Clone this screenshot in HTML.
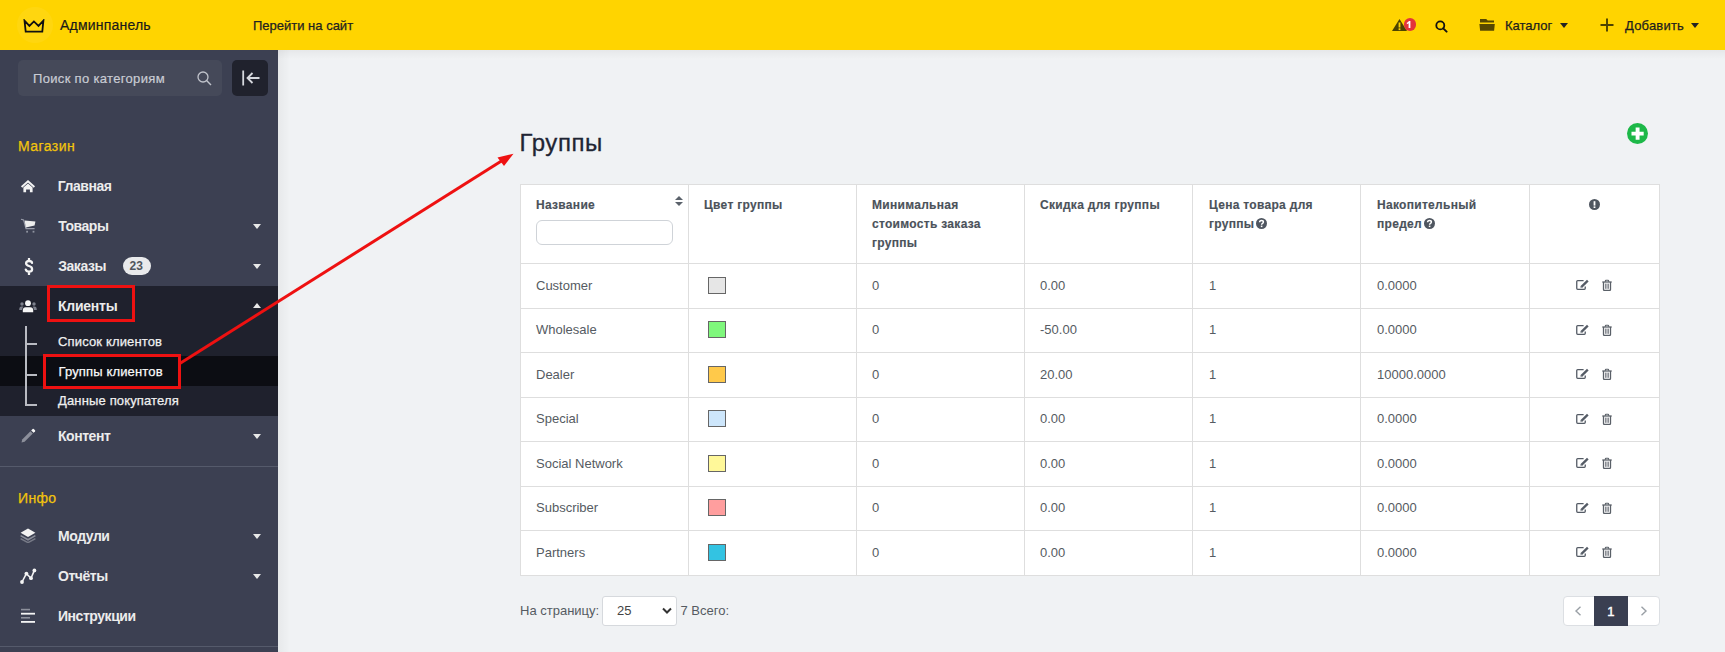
<!DOCTYPE html>
<html><head><meta charset="utf-8">
<style>
*{box-sizing:border-box}
html,body{margin:0;padding:0}
body{width:1725px;height:652px;overflow:hidden;position:relative;background:#f0f2f4;font-family:"Liberation Sans",sans-serif}
.a{position:absolute}
.t{position:absolute;line-height:1;white-space:nowrap}
#hdr{left:0;top:0;width:1725px;height:50px;background:#ffd400}
#sb{left:0;top:50px;width:278px;height:602px;background:#3c4052}
.mi{color:#ececec;font-size:14px;font-weight:700;letter-spacing:-.45px}
.sec{color:#f2c40c;font-size:14px;-webkit-text-stroke:.25px #f2c40c}
.sub{color:#f0f0f0;font-size:13px;-webkit-text-stroke:.25px #f0f0f0}
.caret{position:absolute;width:0;height:0;border-left:4.6px solid transparent;border-right:4.6px solid transparent;border-top:5.8px solid #e8e8e8}
.th{color:#4b525a;font-size:12px;font-weight:700;letter-spacing:.3px;-webkit-text-stroke:.15px #4b525a}
.td{color:#555b62;font-size:13px}
.vl{position:absolute;top:184px;width:1px;height:392px;background:#dedede}
.hl{position:absolute;left:520px;width:1140px;height:1px;background:#dedede}
.sw{position:absolute;left:708px;width:18px;height:17px;border:1px solid #666}
</style></head><body>
<!-- header -->
<div id="hdr" class="a"></div>
<div class="a" style="left:17px;top:7px;width:36px;height:36px;border-radius:50%;background:rgba(255,255,255,.06)"></div>
<svg class="a" style="left:23px;top:18.8px" width="22" height="15" viewBox="0 0 22 15"><path d="M1.5 1.6 L6.4 6.9 L10.9 2.4 L15.5 6.9 L20.4 1.6 L19.3 12.7 H2.7 Z" fill="none" stroke="#111" stroke-width="1.8" stroke-linejoin="miter" stroke-miterlimit="6"/></svg>
<div class="t" style="left:60px;top:18.2px;font-size:14px;color:#1a1a1a;letter-spacing:.2px;-webkit-text-stroke:.2px #1a1a1a">Админпанель</div>
<div class="t" style="left:253px;top:18.7px;font-size:13px;color:#222;-webkit-text-stroke:.25px #222">Перейти на сайт</div>

<div class="a" style="left:278px;top:50px;width:1447px;height:9px;background:linear-gradient(rgba(0,0,0,.045),rgba(0,0,0,0))"></div>
<div class="a" style="left:278px;top:50px;width:12px;height:602px;background:linear-gradient(90deg,rgba(0,0,0,.04),rgba(0,0,0,0))"></div>
<div id="sb" class="a"></div>
<!-- header right -->
<svg class="a" style="left:1392px;top:19px" width="15" height="12" viewBox="0 0 15 12"><path d="M7.5 0 L15 12 H0 Z" fill="#4d4300"/><rect x="6.6" y="3.5" width="1.8" height="5" fill="#ffd400"/><rect x="6.6" y="9.3" width="1.8" height="1.8" fill="#ffd400"/></svg>
<div class="a" style="left:1403.5px;top:18.2px;width:12.5px;height:12.5px;border-radius:50%;background:#e3343a"></div>
<svg class="a" style="left:1405px;top:20px" width="8" height="10" viewBox="0 0 8 10"><path d="M4.5 1 V8" stroke="#fff" stroke-width="1.8"/><path d="M5.2 0.9 L1.8 2.8 L1.8 4.2 L4.5 3 Z" fill="#fff"/></svg>
<svg class="a" style="left:1435px;top:19.5px" width="13" height="13" viewBox="0 0 13 13"><circle cx="5.3" cy="5.4" r="4" fill="none" stroke="#111" stroke-width="1.8"/><path d="M8.2 8.3 L11.6 11.7" stroke="#111" stroke-width="1.9" stroke-linecap="round"/></svg>
<svg class="a" style="left:1479px;top:19px" width="17" height="12" viewBox="0 0 17 12"><path d="M1 0.1 H7.2 L8.7 1.6 H15 V3.6 H1 Z" fill="#574800"/><path d="M0.4 5.1 H15.8 L15.1 11.8 H1.1 Z" fill="#574800"/></svg>
<div class="t" style="left:1505px;top:19.2px;font-size:13px;color:#1e1e1e;-webkit-text-stroke:.25px #1e1e1e">Каталог</div>
<div class="caret" style="left:1559.5px;top:23px;border-left-width:4px;border-right-width:4px;border-top:5px solid #222"></div>
<svg class="a" style="left:1600px;top:18px" width="14" height="14" viewBox="0 0 14 14"><path d="M7 0.5 V13.5 M0.5 7 H13.5" stroke="#4d4300" stroke-width="1.9"/></svg>
<div class="t" style="left:1625px;top:19.2px;font-size:13px;color:#1e1e1e;letter-spacing:.2px;-webkit-text-stroke:.25px #1e1e1e">Добавить</div>
<div class="caret" style="left:1690.5px;top:23px;border-left-width:4px;border-right-width:4px;border-top:5px solid #222"></div>

<!-- sidebar -->
<div class="a" style="left:18px;top:60px;width:204px;height:36px;border-radius:5px;background:#454959"></div>
<div class="t" style="left:33px;top:72px;font-size:13px;color:#c9ccd4;letter-spacing:.33px;-webkit-text-stroke:.2px #c9ccd4">Поиск по категориям</div>
<svg class="a" style="left:197px;top:71px" width="15" height="15" viewBox="0 0 15 15"><circle cx="6" cy="6" r="5" fill="none" stroke="#c0c3cb" stroke-width="1.3"/><path d="M9.6 9.6 L14 14" stroke="#c0c3cb" stroke-width="1.4"/></svg>
<div class="a" style="left:232px;top:60px;width:36px;height:36px;border-radius:5px;background:#20222d"></div>
<svg class="a" style="left:242px;top:70px" width="18" height="16" viewBox="0 0 18 16"><path d="M1.2 0.5 V15.5" stroke="#d6d8de" stroke-width="1.8"/><path d="M17.5 8 H5.5 M10.5 3 L5.5 8 L10.5 13" fill="none" stroke="#d6d8de" stroke-width="1.8"/></svg>

<div class="t sec" style="left:18px;top:139.4px;letter-spacing:.45px">Магазин</div>


<div class="t mi" style="left:57.8px;top:179.3px">Главная</div>
<svg class="a" style="left:20px;top:179px" width="16" height="14" viewBox="0 0 16 14"><path d="M1.6 8 L8 2.2 L14.4 8" fill="none" stroke="#f4f4f4" stroke-width="1.9"/><path d="M3.4 8.6 L8 4.6 L12.6 8.6 V13.2 H9.9 V10.4 H6.1 V13.2 H3.4 Z" fill="#f4f4f4"/></svg>

<div class="t mi" style="left:58.2px;top:219.2px">Товары</div>
<svg class="a" style="left:20px;top:218px" width="17" height="16" viewBox="0 0 17 16"><path d="M1 1.2 L3.6 2 L6 10.6 H14.6" fill="none" stroke="#9a9daa" stroke-width="1.1"/><path d="M4.6 2.4 L15.4 3.4 L14.6 7.6 L5.8 9.4 Z" fill="#eeeeee"/><rect x="6.2" y="12.8" width="1.8" height="1.8" fill="#8f93a0"/><rect x="12.6" y="12.8" width="1.8" height="1.8" fill="#8f93a0"/></svg>
<div class="caret" style="left:252.9px;top:224px"></div>

<div class="t mi" style="left:58.2px;top:259.1px">Заказы</div>
<svg class="a" style="left:23.5px;top:257.5px" width="10" height="17" viewBox="0 0 10 17"><path d="M8 4.9 Q7.7 3 5 3 Q2.1 3 2.1 5.3 Q2.1 7.2 5 8 Q8.1 8.8 8.1 11.3 Q8.1 13.7 5 13.7 Q2.3 13.7 1.8 11.6 M5 0.8 V3 M5 13.7 V16.2" fill="none" stroke="#f4f4f4" stroke-width="2.3" stroke-linecap="round"/></svg>
<div class="a" style="left:123px;top:257px;width:27.5px;height:17.5px;border-radius:9px;background:#e9eaec"></div>
<div class="t" style="left:129.5px;top:260px;font-size:12px;font-weight:700;color:#50555c">23</div>
<div class="caret" style="left:252.9px;top:264px"></div>

<!-- active section -->
<div class="a" style="left:0;top:286px;width:278px;height:130px;background:#1f212d"></div>
<div class="a" style="left:0;top:356px;width:278px;height:30px;background:#0c0d13"></div>
<div class="t mi" style="left:58px;top:299.1px;letter-spacing:-.25px">Клиенты</div>
<svg class="a" style="left:19px;top:299px" width="18" height="14" viewBox="0 0 18 14"><circle cx="3" cy="5" r="1.7" fill="#7e818d"/><circle cx="15" cy="5" r="1.7" fill="#7e818d"/><path d="M0.2 11 Q0.2 7.6 2.6 7.6 H4.4 Q3.2 8.8 3.2 11 Z M17.8 11 Q17.8 7.6 15.4 7.6 H13.6 Q14.8 8.8 14.8 11 Z" fill="#7e818d"/><circle cx="9" cy="4.2" r="2.9" fill="#f6f6f6"/><path d="M3.8 13.2 V11.6 Q3.8 8.2 6.6 8.2 H11.4 Q14.2 8.2 14.2 11.6 V13.2 Z" fill="#f6f6f6"/></svg>
<div class="caret" style="left:252.8px;top:302.5px;border-top:0;border-bottom:5.8px solid #e8e8e8"></div>
<div class="a" style="left:25px;top:326px;width:2px;height:80px;background:#b9bbc2"></div>
<div class="a" style="left:25px;top:343px;width:12px;height:2px;background:#b9bbc2"></div>
<div class="a" style="left:25px;top:374px;width:12px;height:2px;background:#b9bbc2"></div>
<div class="a" style="left:25px;top:404px;width:12px;height:2px;background:#b9bbc2"></div>
<div class="t sub" style="left:58px;top:334.6px;letter-spacing:.15px">Список клиентов</div>
<div class="t sub" style="left:58.5px;top:364.6px;letter-spacing:.15px;color:#fff">Группы клиентов</div>
<div class="t sub" style="left:58px;top:393.8px;letter-spacing:.15px">Данные покупателя</div>

<div class="t mi" style="left:58px;top:429.1px">Контент</div>
<svg class="a" style="left:20px;top:428px" width="16" height="16" viewBox="0 0 16 16"><path d="M1.5 14.5 L2.2 11.4 L10.4 3.2 L12.8 5.6 L4.6 13.8 Z" fill="#8c8f9b"/><path d="M11.2 2.4 L12.6 1 Q13.2 0.5 13.8 1 L15 2.2 Q15.5 2.8 15 3.4 L13.6 4.8 Z" fill="#f6f6f6"/></svg>
<div class="caret" style="left:252.9px;top:434px"></div>

<div class="a" style="left:0;top:466px;width:278px;height:1px;background:#555a6b"></div>
<div class="t sec" style="left:18px;top:490.6px;letter-spacing:.35px">Инфо</div>

<div class="t mi" style="left:58px;top:529.4px">Модули</div>
<svg class="a" style="left:20px;top:528px" width="16" height="15" viewBox="0 0 16 15"><path d="M8 9 L0.6 4.8 L8 0.6 L15.4 4.8 Z" fill="#f4f4f4"/><path d="M0.6 7.6 L8 11.8 L15.4 7.6" fill="none" stroke="#8c8f9b" stroke-width="1.6"/><path d="M0.6 10.6 L8 14.6 L15.4 10.6" fill="none" stroke="#777a87" stroke-width="1.6"/></svg>
<div class="caret" style="left:252.9px;top:534px"></div>

<div class="t mi" style="left:58px;top:569.1px">Отчёты</div>
<svg class="a" style="left:19px;top:567px" width="18" height="18" viewBox="0 0 18 18"><path d="M3 15 L7.4 6.6 L12 11.2 L15.4 3.4" fill="none" stroke="#f4f4f4" stroke-width="1.6"/><circle cx="3" cy="15" r="1.9" fill="#f4f4f4"/><circle cx="7.4" cy="6.6" r="1.9" fill="#f4f4f4"/><circle cx="12" cy="11.2" r="1.9" fill="#f4f4f4"/><circle cx="15.4" cy="3.4" r="1.9" fill="#f4f4f4"/></svg>
<div class="caret" style="left:252.9px;top:574px"></div>

<div class="t mi" style="left:58px;top:609.4px">Инструкции</div>
<svg class="a" style="left:21px;top:608px" width="14" height="16" viewBox="0 0 14 16"><rect x="0" y="0.8" width="9" height="1.6" fill="#8c8f9b"/><rect x="0" y="4.8" width="14" height="1.8" fill="#f4f4f4"/><rect x="0" y="9" width="9" height="1.6" fill="#8c8f9b"/><rect x="0" y="13" width="14" height="1.8" fill="#f4f4f4"/></svg>
<div class="a" style="left:0;top:646px;width:278px;height:1px;background:#555a6b"></div>

<!-- main -->
<div class="t" style="left:519.5px;top:131.3px;font-size:24px;letter-spacing:.55px;color:#1f2533;-webkit-text-stroke:.3px #1f2533">Группы</div>
<div class="a" style="left:1627.3px;top:123.3px;width:21.2px;height:21.2px;border-radius:50%;background:#1db848"></div>
<svg class="a" style="left:1627.3px;top:123.3px" width="21.2" height="21.2" viewBox="0 0 21.2 21.2"><path d="M10.6 4.5 V16.7 M4.5 10.6 H16.7" stroke="#fff" stroke-width="3.9"/></svg>

<div class="a" style="left:520px;top:184px;width:1140px;height:392px;background:#fff"></div>
<div class="hl" style="top:184px"></div>
<div class="hl" style="top:575px"></div>
<div class="vl" style="left:520px"></div><div class="vl" style="left:688px"></div><div class="vl" style="left:856px"></div><div class="vl" style="left:1024px"></div><div class="vl" style="left:1192px"></div><div class="vl" style="left:1360px"></div><div class="vl" style="left:1529px"></div><div class="vl" style="left:1659px"></div><div class="hl" style="top:263px"></div><div class="hl" style="top:308px"></div><div class="hl" style="top:352px"></div><div class="hl" style="top:397px"></div><div class="hl" style="top:441px"></div><div class="hl" style="top:486px"></div><div class="hl" style="top:530px"></div>
<div class="t th" style="left:536px;top:198.5px">Название</div>
<svg class="a" style="left:675px;top:196px" width="8" height="10" viewBox="0 0 8 10"><path d="M4 0 L8 4 H0 Z M0 6 H8 L4 10 Z" fill="#5b626b"/></svg>
<div class="a" style="left:536px;top:220px;width:137px;height:25px;border:1px solid #cfd3d8;border-radius:6px;background:#fff"></div>
<div class="t th" style="left:704px;top:198.5px">Цвет группы</div>
<div class="t th" style="left:872px;line-height:19px;top:196.2px">Минимальная<br>стоимость заказа<br>группы</div>
<div class="t th" style="left:1040px;top:198.5px">Скидка для группы</div>
<div class="t th" style="left:1209px;top:196.2px;line-height:19px">Цена товара для<br>группы <span style="display:inline-block;width:11px;height:11px"></span></div>
<div class="t th" style="left:1377px;top:196.2px;line-height:19px">Накопительный<br>предел <span style="display:inline-block;width:11px;height:11px"></span></div>
<!--ROWS--><div class="t td" style="left:536px;top:278.9px">Customer</div><div class="sw" style="top:277px;background:#e6e6e6"></div><div class="t td" style="left:872px;top:278.9px">0</div><div class="t td" style="left:1040px;top:278.9px">0.00</div><div class="t td" style="left:1209px;top:278.9px">1</div><div class="t td" style="left:1377px;top:278.9px">0.0000</div><div class="t td" style="left:536px;top:323.4px">Wholesale</div><div class="sw" style="top:321px;background:#7ff77c"></div><div class="t td" style="left:872px;top:323.4px">0</div><div class="t td" style="left:1040px;top:323.4px">-50.00</div><div class="t td" style="left:1209px;top:323.4px">1</div><div class="t td" style="left:1377px;top:323.4px">0.0000</div><div class="t td" style="left:536px;top:367.9px">Dealer</div><div class="sw" style="top:366px;background:#ffc94a"></div><div class="t td" style="left:872px;top:367.9px">0</div><div class="t td" style="left:1040px;top:367.9px">20.00</div><div class="t td" style="left:1209px;top:367.9px">1</div><div class="t td" style="left:1377px;top:367.9px">10000.0000</div><div class="t td" style="left:536px;top:412.4px">Special</div><div class="sw" style="top:410px;background:#cde6fb"></div><div class="t td" style="left:872px;top:412.4px">0</div><div class="t td" style="left:1040px;top:412.4px">0.00</div><div class="t td" style="left:1209px;top:412.4px">1</div><div class="t td" style="left:1377px;top:412.4px">0.0000</div><div class="t td" style="left:536px;top:456.9px">Social Network</div><div class="sw" style="top:455px;background:#fff899"></div><div class="t td" style="left:872px;top:456.9px">0</div><div class="t td" style="left:1040px;top:456.9px">0.00</div><div class="t td" style="left:1209px;top:456.9px">1</div><div class="t td" style="left:1377px;top:456.9px">0.0000</div><div class="t td" style="left:536px;top:501.4px">Subscriber</div><div class="sw" style="top:499px;background:#ff9e9e"></div><div class="t td" style="left:872px;top:501.4px">0</div><div class="t td" style="left:1040px;top:501.4px">0.00</div><div class="t td" style="left:1209px;top:501.4px">1</div><div class="t td" style="left:1377px;top:501.4px">0.0000</div><div class="t td" style="left:536px;top:545.9px">Partners</div><div class="sw" style="top:544px;background:#33c3e2"></div><div class="t td" style="left:872px;top:545.9px">0</div><div class="t td" style="left:1040px;top:545.9px">0.00</div><div class="t td" style="left:1209px;top:545.9px">1</div><div class="t td" style="left:1377px;top:545.9px">0.0000</div><!--/ROWS-->
<div class="t td" style="left:520px;top:603.9px">На страницу:</div>
<div class="a" style="left:602px;top:596px;width:75px;height:30px;border:1px solid #d6d9dd;border-radius:3px;background:#fff"></div>
<div class="t td" style="left:617px;top:603.9px;color:#444">25</div>
<svg class="a" style="left:662px;top:607px" width="10" height="8" viewBox="0 0 10 8"><path d="M1 1.5 L5 5.5 L9 1.5" fill="none" stroke="#333" stroke-width="2"/></svg>
<div class="t td" style="left:680.5px;top:603.9px">7 Всего:</div>

<div class="a" style="left:1563px;top:596px;width:97px;height:30px;border:1px solid #dcdfe3;border-radius:4px;background:#fff"></div>
<div class="a" style="left:1594px;top:596px;width:34px;height:30px;background:#3a3f51"></div>
<div class="t" style="left:1607.3px;top:604.6px;font-size:13px;color:#fff;-webkit-text-stroke:.4px #fff">1</div>
<svg class="a" style="left:1574px;top:606px" width="8" height="10" viewBox="0 0 8 10"><path d="M6.5 0.8 L2 5 L6.5 9.2" fill="none" stroke="#9aa0a6" stroke-width="1.4"/></svg>
<svg class="a" style="left:1640px;top:606px" width="8" height="10" viewBox="0 0 8 10"><path d="M1.5 0.8 L6 5 L1.5 9.2" fill="none" stroke="#9aa0a6" stroke-width="1.4"/></svg>


<svg class="a" style="left:1588.6px;top:198.8px" width="11" height="11" viewBox="0 0 11 11"><circle cx="5.5" cy="5.5" r="5.5" fill="#4f5660"/><rect x="4.6" y="2.2" width="1.8" height="4.4" fill="#fff"/><rect x="4.6" y="7.4" width="1.8" height="1.6" fill="#fff"/></svg>
<svg class="a" style="left:1256.3px;top:218px" width="11" height="11" viewBox="0 0 11 11"><circle cx="5.5" cy="5.5" r="5.5" fill="#4f5660"/><path d="M3.6 4.2 Q3.6 2.4 5.5 2.4 Q7.4 2.4 7.4 4 Q7.4 5 6.2 5.6 Q5.6 5.9 5.6 6.8" fill="none" stroke="#fff" stroke-width="1.5"/><rect x="4.8" y="7.6" width="1.6" height="1.5" fill="#fff"/></svg>
<svg class="a" style="left:1424px;top:218px" width="11" height="11" viewBox="0 0 11 11"><circle cx="5.5" cy="5.5" r="5.5" fill="#4f5660"/><path d="M3.6 4.2 Q3.6 2.4 5.5 2.4 Q7.4 2.4 7.4 4 Q7.4 5 6.2 5.6 Q5.6 5.9 5.6 6.8" fill="none" stroke="#fff" stroke-width="1.5"/><rect x="4.8" y="7.6" width="1.6" height="1.5" fill="#fff"/></svg>
<!--ICONS--><svg class="a" style="left:1575px;top:279px" width="15" height="12" viewBox="0 0 15 12"><path d="M8.6 1.6 H2.7 Q1.75 1.6 1.75 2.6 V9.3 Q1.75 10.3 2.7 10.3 H9.3 Q10.25 10.3 10.25 9.3 V7.6" fill="none" stroke="#545b65" stroke-width="1.3"/><path d="M6.2 8.1 L12.8 1.6" stroke="#545b65" stroke-width="2.3"/><path d="M5.3 8.9 L5.8 7.1 L7.1 8.4 Z" fill="#8a9098"/></svg><svg class="a" style="left:1602px;top:279px" width="10" height="12" viewBox="0 0 10 12"><path d="M0.3 3 H9.7" stroke="#5a6068" stroke-width="1.3"/><path d="M3.4 2.8 V1.8 Q3.4 1.2 4 1.2 H6 Q6.6 1.2 6.6 1.8 V2.8" fill="none" stroke="#5a6068" stroke-width="1.1"/><path d="M1.5 3.1 V10.6 Q1.5 11.4 2.3 11.4 H7.7 Q8.5 11.4 8.5 10.6 V3.1" fill="none" stroke="#5a6068" stroke-width="1.3"/><path d="M3.6 4.6 V9.8 M5 4.6 V9.8 M6.4 4.6 V9.8" stroke="#5a6068" stroke-width="0.8"/></svg><svg class="a" style="left:1575px;top:324px" width="15" height="12" viewBox="0 0 15 12"><path d="M8.6 1.6 H2.7 Q1.75 1.6 1.75 2.6 V9.3 Q1.75 10.3 2.7 10.3 H9.3 Q10.25 10.3 10.25 9.3 V7.6" fill="none" stroke="#545b65" stroke-width="1.3"/><path d="M6.2 8.1 L12.8 1.6" stroke="#545b65" stroke-width="2.3"/><path d="M5.3 8.9 L5.8 7.1 L7.1 8.4 Z" fill="#8a9098"/></svg><svg class="a" style="left:1602px;top:324px" width="10" height="12" viewBox="0 0 10 12"><path d="M0.3 3 H9.7" stroke="#5a6068" stroke-width="1.3"/><path d="M3.4 2.8 V1.8 Q3.4 1.2 4 1.2 H6 Q6.6 1.2 6.6 1.8 V2.8" fill="none" stroke="#5a6068" stroke-width="1.1"/><path d="M1.5 3.1 V10.6 Q1.5 11.4 2.3 11.4 H7.7 Q8.5 11.4 8.5 10.6 V3.1" fill="none" stroke="#5a6068" stroke-width="1.3"/><path d="M3.6 4.6 V9.8 M5 4.6 V9.8 M6.4 4.6 V9.8" stroke="#5a6068" stroke-width="0.8"/></svg><svg class="a" style="left:1575px;top:368px" width="15" height="12" viewBox="0 0 15 12"><path d="M8.6 1.6 H2.7 Q1.75 1.6 1.75 2.6 V9.3 Q1.75 10.3 2.7 10.3 H9.3 Q10.25 10.3 10.25 9.3 V7.6" fill="none" stroke="#545b65" stroke-width="1.3"/><path d="M6.2 8.1 L12.8 1.6" stroke="#545b65" stroke-width="2.3"/><path d="M5.3 8.9 L5.8 7.1 L7.1 8.4 Z" fill="#8a9098"/></svg><svg class="a" style="left:1602px;top:368px" width="10" height="12" viewBox="0 0 10 12"><path d="M0.3 3 H9.7" stroke="#5a6068" stroke-width="1.3"/><path d="M3.4 2.8 V1.8 Q3.4 1.2 4 1.2 H6 Q6.6 1.2 6.6 1.8 V2.8" fill="none" stroke="#5a6068" stroke-width="1.1"/><path d="M1.5 3.1 V10.6 Q1.5 11.4 2.3 11.4 H7.7 Q8.5 11.4 8.5 10.6 V3.1" fill="none" stroke="#5a6068" stroke-width="1.3"/><path d="M3.6 4.6 V9.8 M5 4.6 V9.8 M6.4 4.6 V9.8" stroke="#5a6068" stroke-width="0.8"/></svg><svg class="a" style="left:1575px;top:413px" width="15" height="12" viewBox="0 0 15 12"><path d="M8.6 1.6 H2.7 Q1.75 1.6 1.75 2.6 V9.3 Q1.75 10.3 2.7 10.3 H9.3 Q10.25 10.3 10.25 9.3 V7.6" fill="none" stroke="#545b65" stroke-width="1.3"/><path d="M6.2 8.1 L12.8 1.6" stroke="#545b65" stroke-width="2.3"/><path d="M5.3 8.9 L5.8 7.1 L7.1 8.4 Z" fill="#8a9098"/></svg><svg class="a" style="left:1602px;top:413px" width="10" height="12" viewBox="0 0 10 12"><path d="M0.3 3 H9.7" stroke="#5a6068" stroke-width="1.3"/><path d="M3.4 2.8 V1.8 Q3.4 1.2 4 1.2 H6 Q6.6 1.2 6.6 1.8 V2.8" fill="none" stroke="#5a6068" stroke-width="1.1"/><path d="M1.5 3.1 V10.6 Q1.5 11.4 2.3 11.4 H7.7 Q8.5 11.4 8.5 10.6 V3.1" fill="none" stroke="#5a6068" stroke-width="1.3"/><path d="M3.6 4.6 V9.8 M5 4.6 V9.8 M6.4 4.6 V9.8" stroke="#5a6068" stroke-width="0.8"/></svg><svg class="a" style="left:1575px;top:457px" width="15" height="12" viewBox="0 0 15 12"><path d="M8.6 1.6 H2.7 Q1.75 1.6 1.75 2.6 V9.3 Q1.75 10.3 2.7 10.3 H9.3 Q10.25 10.3 10.25 9.3 V7.6" fill="none" stroke="#545b65" stroke-width="1.3"/><path d="M6.2 8.1 L12.8 1.6" stroke="#545b65" stroke-width="2.3"/><path d="M5.3 8.9 L5.8 7.1 L7.1 8.4 Z" fill="#8a9098"/></svg><svg class="a" style="left:1602px;top:457px" width="10" height="12" viewBox="0 0 10 12"><path d="M0.3 3 H9.7" stroke="#5a6068" stroke-width="1.3"/><path d="M3.4 2.8 V1.8 Q3.4 1.2 4 1.2 H6 Q6.6 1.2 6.6 1.8 V2.8" fill="none" stroke="#5a6068" stroke-width="1.1"/><path d="M1.5 3.1 V10.6 Q1.5 11.4 2.3 11.4 H7.7 Q8.5 11.4 8.5 10.6 V3.1" fill="none" stroke="#5a6068" stroke-width="1.3"/><path d="M3.6 4.6 V9.8 M5 4.6 V9.8 M6.4 4.6 V9.8" stroke="#5a6068" stroke-width="0.8"/></svg><svg class="a" style="left:1575px;top:502px" width="15" height="12" viewBox="0 0 15 12"><path d="M8.6 1.6 H2.7 Q1.75 1.6 1.75 2.6 V9.3 Q1.75 10.3 2.7 10.3 H9.3 Q10.25 10.3 10.25 9.3 V7.6" fill="none" stroke="#545b65" stroke-width="1.3"/><path d="M6.2 8.1 L12.8 1.6" stroke="#545b65" stroke-width="2.3"/><path d="M5.3 8.9 L5.8 7.1 L7.1 8.4 Z" fill="#8a9098"/></svg><svg class="a" style="left:1602px;top:502px" width="10" height="12" viewBox="0 0 10 12"><path d="M0.3 3 H9.7" stroke="#5a6068" stroke-width="1.3"/><path d="M3.4 2.8 V1.8 Q3.4 1.2 4 1.2 H6 Q6.6 1.2 6.6 1.8 V2.8" fill="none" stroke="#5a6068" stroke-width="1.1"/><path d="M1.5 3.1 V10.6 Q1.5 11.4 2.3 11.4 H7.7 Q8.5 11.4 8.5 10.6 V3.1" fill="none" stroke="#5a6068" stroke-width="1.3"/><path d="M3.6 4.6 V9.8 M5 4.6 V9.8 M6.4 4.6 V9.8" stroke="#5a6068" stroke-width="0.8"/></svg><svg class="a" style="left:1575px;top:546px" width="15" height="12" viewBox="0 0 15 12"><path d="M8.6 1.6 H2.7 Q1.75 1.6 1.75 2.6 V9.3 Q1.75 10.3 2.7 10.3 H9.3 Q10.25 10.3 10.25 9.3 V7.6" fill="none" stroke="#545b65" stroke-width="1.3"/><path d="M6.2 8.1 L12.8 1.6" stroke="#545b65" stroke-width="2.3"/><path d="M5.3 8.9 L5.8 7.1 L7.1 8.4 Z" fill="#8a9098"/></svg><svg class="a" style="left:1602px;top:546px" width="10" height="12" viewBox="0 0 10 12"><path d="M0.3 3 H9.7" stroke="#5a6068" stroke-width="1.3"/><path d="M3.4 2.8 V1.8 Q3.4 1.2 4 1.2 H6 Q6.6 1.2 6.6 1.8 V2.8" fill="none" stroke="#5a6068" stroke-width="1.1"/><path d="M1.5 3.1 V10.6 Q1.5 11.4 2.3 11.4 H7.7 Q8.5 11.4 8.5 10.6 V3.1" fill="none" stroke="#5a6068" stroke-width="1.3"/><path d="M3.6 4.6 V9.8 M5 4.6 V9.8 M6.4 4.6 V9.8" stroke="#5a6068" stroke-width="0.8"/></svg><!--/ICONS-->
<!-- annotations -->
<div class="a" style="left:47px;top:285px;width:88px;height:37px;border:3px solid #ee1111"></div>
<div class="a" style="left:43px;top:354px;width:138px;height:35px;border:3px solid #ee1111"></div>
<svg class="a" style="left:0;top:0" width="1725" height="652" viewBox="0 0 1725 652"><path d="M179 364 L503 160" stroke="#ee1111" stroke-width="3"/><path d="M513.5 153.8 L497.5 157.5 L504 166 Z" fill="#ee1111"/></svg>
</body></html>
